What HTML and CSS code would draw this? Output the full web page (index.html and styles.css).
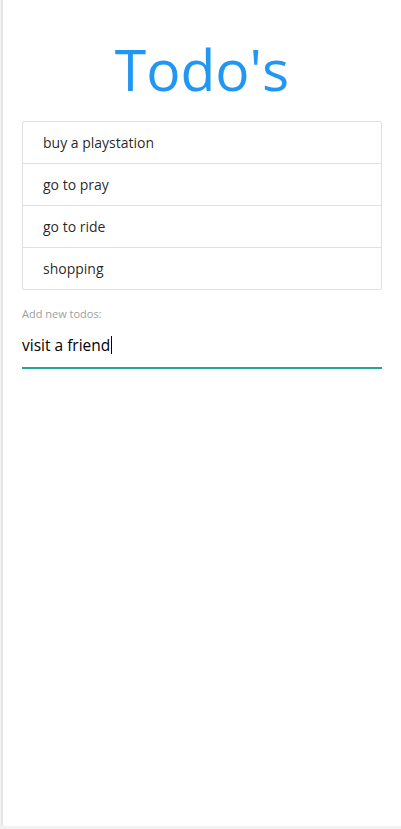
FILE: index.html
```html
<!DOCTYPE html>
<html lang="en">
<head>
<meta charset="utf-8">
<title>Todo's</title>
<link rel="stylesheet" href="styles.css">
</head>
<body>
<div class="page">
  <h1 class="title">Todo's</h1>
  <ul class="collection">
    <li class="collection-item">buy a playstation</li>
    <li class="collection-item">go to pray</li>
    <li class="collection-item">go to ride</li>
    <li class="collection-item">shopping</li>
  </ul>
  <form class="input-field">
    <label class="field-label">Add new todos:</label>
    <div class="field-input">visit a friend<span class="caret"></span></div>
  </form>
</div>
</body>
</html>
```

FILE: styles.css
```css
html, body {
  margin: 0;
  padding: 0;
}
body {
  background: #f2f2f2;
  font-family: "Open Sans", "Noto Sans", sans-serif;
  color: rgba(0, 0, 0, 0.87);
}
.page {
  margin-left: 1px;
  height: 826px;
  box-sizing: border-box;
  background: #fff;
  border-left: 2px solid #e6e6e6;
  padding: 0 19px 0 19px;
}
.title {
  margin: 0;
  padding-top: 36px;
  height: 121px;
  box-sizing: border-box;
  text-align: center;
  font-size: 57px;
  font-weight: 400;
  line-height: 66px;
  color: #2196f3;
}
.collection {
  list-style: none;
  margin: 0;
  padding: 0;
  border: 1px solid #e0e0e0;
  border-radius: 2px;
}
.collection-item {
  padding: 10px 20px;
  line-height: 21px;
  font-size: 14px;
  border-bottom: 1px solid #e0e0e0;
}
.collection-item:last-child {
  border-bottom: none;
}
.input-field {
  margin-top: 17px;
  display: flex;
  flex-direction: column;
}
.field-label {
  font-size: 11px;
  line-height: 13px;
  color: #9e9e9e;
}
.field-input {
  margin-top: 15px;
  font-size: 15.5px;
  line-height: 20px;
  color: #000;
  padding-bottom: 12px;
  border-bottom: 2px solid #26a69a;
  display: flex;
  align-items: center;
}
.caret {
  display: inline-block;
  width: 1px;
  height: 18px;
  background: #000;
  margin-left: 1px;
}
```
